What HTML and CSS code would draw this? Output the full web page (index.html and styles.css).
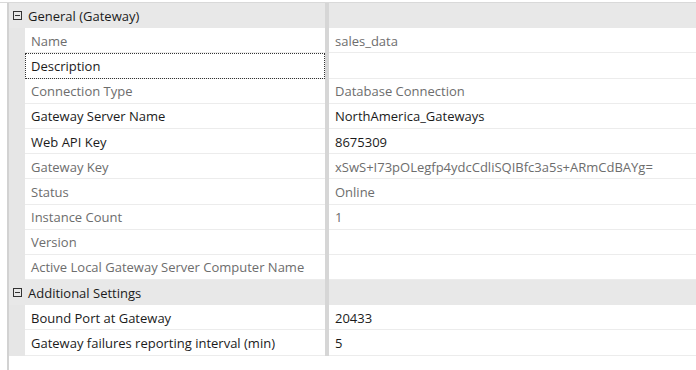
FILE: index.html
```html
<!DOCTYPE html>
<html>
<head>
<meta charset="utf-8">
<link rel="stylesheet" href="styles.css">
</head>
<body>
<div class="topline"></div>
<div class="frame">
  <div class="grid">
    <div class="cat">
      <div class="gut"><svg class="tog" width="9" height="9" viewBox="0 0 9 9"><rect x="0.5" y="0.5" width="8" height="8" fill="none" stroke="#333" stroke-width="1"/><line x1="2" y1="4.5" x2="7" y2="4.5" stroke="#333" stroke-width="1"/></svg></div>
      <div class="clabel">General (Gateway)</div>
      <div class="split"></div>
      <div class="cfill"></div>
    </div>
    <div class="row"><div class="gut"></div><div class="name ro">Name</div><div class="split"></div><div class="val ro">sales_data</div></div>
    <div class="row"><div class="gut"></div><div class="name focus">Description</div><div class="split"></div><div class="val"></div></div>
    <div class="row"><div class="gut"></div><div class="name ro">Connection Type</div><div class="split"></div><div class="val ro">Database Connection</div></div>
    <div class="row"><div class="gut"></div><div class="name">Gateway Server Name</div><div class="split"></div><div class="val">NorthAmerica_Gateways</div></div>
    <div class="row"><div class="gut"></div><div class="name">Web API Key</div><div class="split"></div><div class="val">8675309</div></div>
    <div class="row"><div class="gut"></div><div class="name ro">Gateway Key</div><div class="split"></div><div class="val ro">xSwS+I73pOLegfp4ydcCdliSQIBfc3a5s+ARmCdBAYg=</div></div>
    <div class="row"><div class="gut"></div><div class="name ro">Status</div><div class="split"></div><div class="val ro">Online</div></div>
    <div class="row"><div class="gut"></div><div class="name ro">Instance Count</div><div class="split"></div><div class="val ro">1</div></div>
    <div class="row"><div class="gut"></div><div class="name ro">Version</div><div class="split"></div><div class="val ro"></div></div>
    <div class="row"><div class="gut"></div><div class="name ro">Active Local Gateway Server Computer Name</div><div class="split"></div><div class="val ro"></div></div>
    <div class="cat">
      <div class="gut"><svg class="tog" width="9" height="9" viewBox="0 0 9 9"><rect x="0.5" y="0.5" width="8" height="8" fill="none" stroke="#333" stroke-width="1"/><line x1="2" y1="4.5" x2="7" y2="4.5" stroke="#333" stroke-width="1"/></svg></div>
      <div class="clabel">Additional Settings</div>
      <div class="split"></div>
      <div class="cfill"></div>
    </div>
    <div class="row"><div class="gut"></div><div class="name">Bound Port at Gateway</div><div class="split"></div><div class="val">20433</div></div>
    <div class="row"><div class="gut"></div><div class="name">Gateway failures reporting interval (min)</div><div class="split"></div><div class="val">5</div></div>
  </div>
</div>
</body>
</html>
```
FILE: styles.css
```css
html, body {
  margin: 0;
  padding: 0;
  background: #ffffff;
  font-family: "Open Sans", "Noto Sans", sans-serif;
  font-size: 13px;
  color: #1b1b1b;
  width: 696px;
  height: 370px;
  overflow: hidden;
}
.topline {
  height: 2px;
  border-bottom: 1px solid #d9d9d9;
}
.frame {
  margin-left: 7px;
  border-left: 2px solid #d2d2d2;
  height: 367px;
}
.grid {
  display: flex;
  flex-direction: column;
}
.cat, .row {
  display: grid;
  grid-template-columns: 16px 300px 4px 1fr;
  height: 25.2px;
}
.cat {
  background: #e8e8e8;
}
.gut {
  background: #e6e6e6;
  display: flex;
  align-items: center;
  justify-content: center;
}
.cat .gut {
  background: #e8e8e8;
  padding-left: 1px;
}
.tog {
  display: block;
}
.clabel {
  padding-left: 3px;
  padding-top: 1px;
  display: flex;
  align-items: center;
}
.split {
  background: #d6d6d6;
}
.name, .val {
  background: #ffffff;
  border-bottom: 1px solid #ececec;
  padding-left: 6px;
  padding-top: 1px;
  display: flex;
  align-items: center;
  white-space: nowrap;
  overflow: hidden;
  box-sizing: border-box;
}
.ro {
  color: #6d6d6d;
}
.focus {
  outline: 1px dotted #333;
  outline-offset: -1px;
}
```
